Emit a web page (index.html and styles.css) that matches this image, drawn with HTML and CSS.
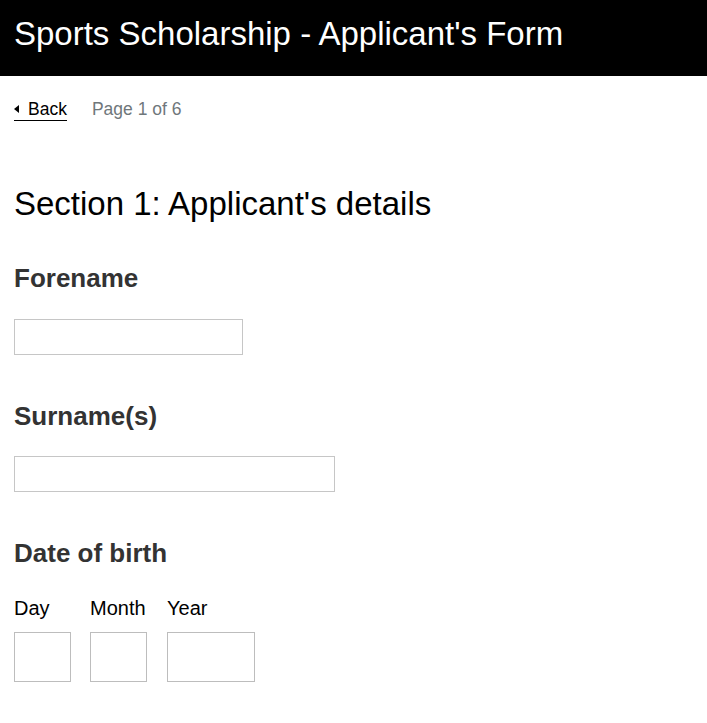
FILE: index.html
```html
<!DOCTYPE html>
<html lang="en">
<head>
<meta charset="utf-8">
<title>Sports Scholarship - Applicant's Form</title>
<link rel="stylesheet" href="styles.css">
</head>
<body>
<header class="site-header">
  <h1 class="site-title">Sports Scholarship - Applicant's Form</h1>
</header>
<main class="page">
  <nav class="nav-row">
    <a class="back-link" href="#"><span class="back-arrow"></span>Back</a>
    <span class="page-count">Page 1 of 6</span>
  </nav>
  <h2 class="section-heading">Section 1: Applicant's details</h2>
  <form class="form">
    <div class="field field-forename">
      <label class="field-label" for="forename">Forename</label>
      <input class="text-input input-forename" id="forename" type="text">
    </div>
    <div class="field field-surname">
      <label class="field-label" for="surname">Surname(s)</label>
      <input class="text-input input-surname" id="surname" type="text">
    </div>
    <div class="field field-dob">
      <div class="field-label">Date of birth</div>
      <div class="date-row">
        <div class="date-item">
          <label class="date-label" for="dob-day">Day</label>
          <input class="text-input date-input date-day" id="dob-day" type="text">
        </div>
        <div class="date-item">
          <label class="date-label" for="dob-month">Month</label>
          <input class="text-input date-input date-month" id="dob-month" type="text">
        </div>
        <div class="date-item date-item-year">
          <label class="date-label" for="dob-year">Year</label>
          <input class="text-input date-input date-year" id="dob-year" type="text">
        </div>
      </div>
    </div>
  </form>
</main>
</body>
</html>
```
FILE: styles.css
```css
* { box-sizing: border-box; }

html, body {
  margin: 0;
  padding: 0;
  background: #fff;
  font-family: "Liberation Sans", Arial, sans-serif;
  color: #000;
}

.site-header {
  background: #000;
  padding: 14px 14px 22px;
}

.site-title {
  margin: 0;
  font-size: 33px;
  line-height: 40px;
  font-weight: normal;
  color: #fff;
}

.page {
  padding: 0 14px;
}

.nav-row {
  display: flex;
  align-items: flex-start;
  gap: 25px;
  margin-top: 23px;
}

.back-link {
  display: flex;
  align-items: center;
  font-size: 17.5px;
  line-height: 20px;
  color: #000;
  text-decoration: none;
  padding-bottom: 1px;
  border-bottom: 1px solid #000;
}

.back-arrow {
  display: block;
  width: 0;
  height: 0;
  border-top: 4px solid transparent;
  border-bottom: 4px solid transparent;
  border-right: 5px solid #000;
  margin-right: 9px;
}

.page-count {
  font-size: 17.5px;
  line-height: 20px;
  color: #6f777b;
}

.section-heading {
  margin: 63px 0 0;
  font-size: 33px;
  line-height: 40px;
  font-weight: normal;
  color: #000;
}

.form {
  margin: 0;
}

.field-label {
  display: block;
  font-size: 26px;
  line-height: 30px;
  font-weight: bold;
  color: #333;
}

.field-forename { margin-top: 39px; }
.field-surname { margin-top: 46px; }
.field-dob { margin-top: 46px; }

.text-input {
  display: block;
  margin: 0;
  padding: 0 6px;
  border: 1px solid #c6c6c6;
  border-radius: 0;
  background: #fff;
  font-family: "Liberation Sans", Arial, sans-serif;
  font-size: 18px;
  outline: none;
}

.input-forename {
  width: 229px;
  height: 36px;
  margin-top: 26px;
}

.input-surname {
  width: 321px;
  height: 36px;
  margin-top: 25px;
}

.date-row {
  display: flex;
  gap: 19px;
  margin-top: 28px;
}

.date-item-year {
  margin-left: 1px;
}

.date-label {
  display: block;
  font-size: 20px;
  line-height: 24px;
  color: #000;
}

.date-input {
  height: 50px;
  margin-top: 12px;
  border-color: #bdbdbd;
}

.date-day, .date-month { width: 57px; }
.date-year { width: 88px; }
```
